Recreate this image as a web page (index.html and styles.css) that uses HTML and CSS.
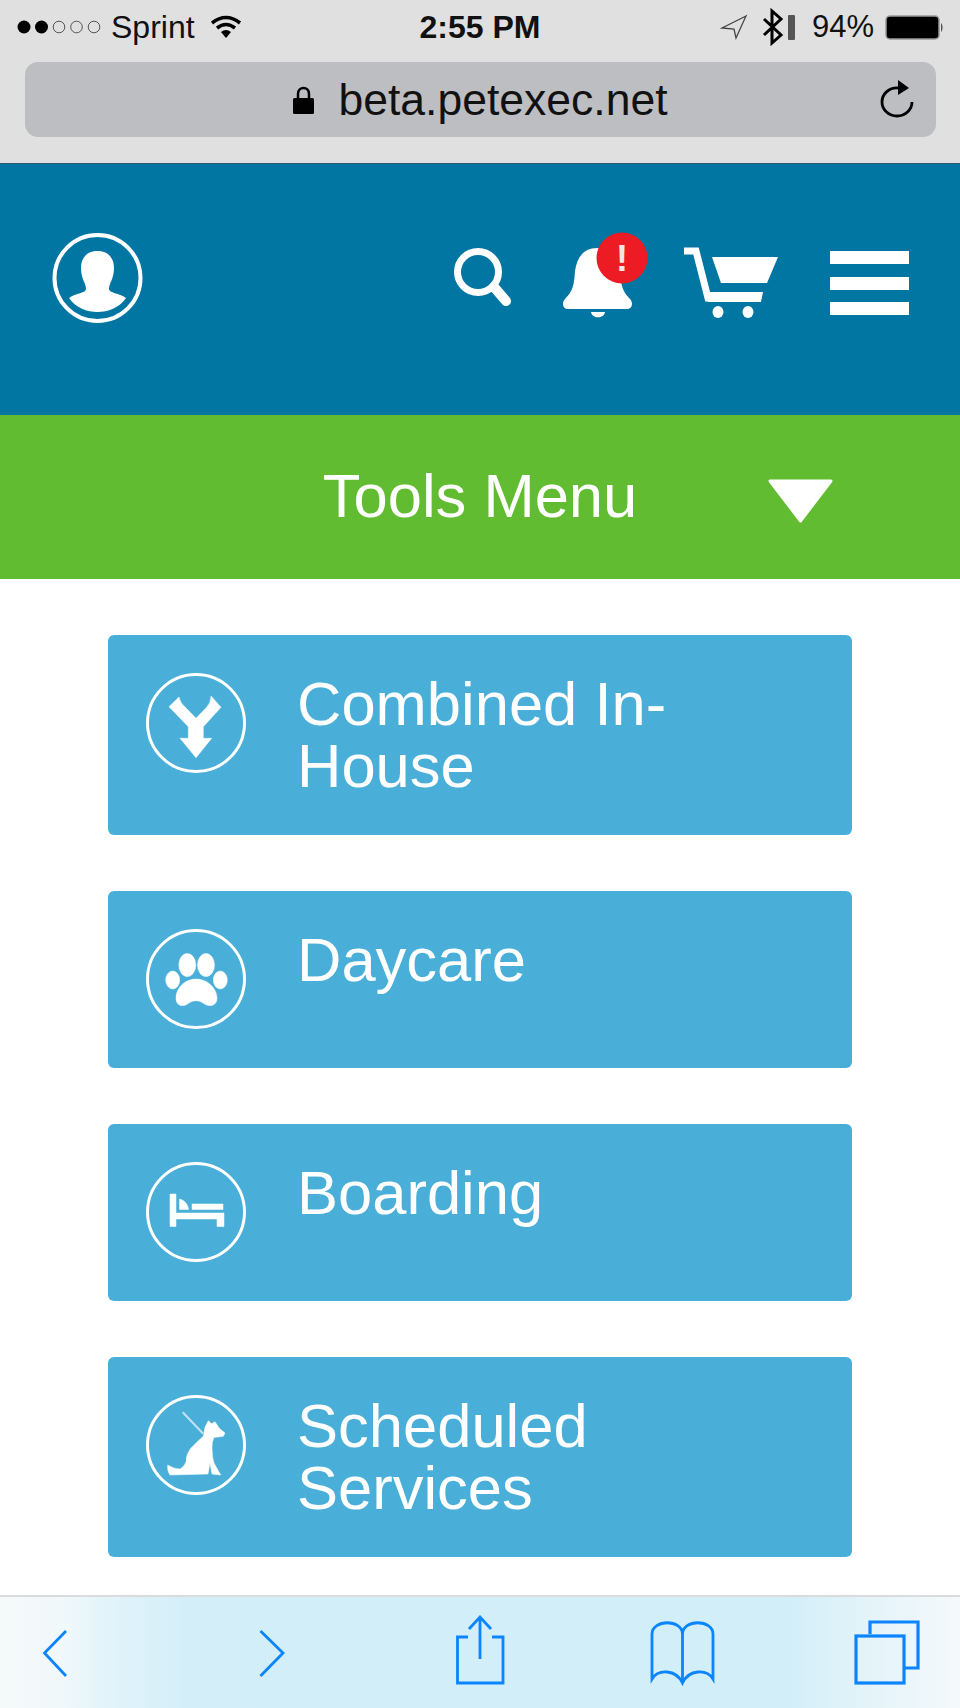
FILE: index.html
```html
<!DOCTYPE html>
<html lang="en">
<head>
    <meta charset="UTF-8">
    <meta name="viewport" content="width=device-width, initial-scale=1.0">
    <title>Tools Menu - PetExec</title>
    <link rel="stylesheet" href="styles.css">
</head>
<body>
    <div class="browser-top">
        <div class="status-bar">
            <div class="status-left">
                <svg class="signal" width="88" height="16" viewBox="0 0 88 16">
                    <circle cx="7" cy="8" r="6.5" fill="#000"/>
                    <circle cx="24.5" cy="8" r="6.5" fill="#000"/>
                    <circle cx="42" cy="8" r="5.8" fill="none" stroke="#555" stroke-width="1"/>
                    <circle cx="59.5" cy="8" r="5.8" fill="none" stroke="#555" stroke-width="1"/>
                    <circle cx="77" cy="8" r="5.8" fill="none" stroke="#555" stroke-width="1"/>
                </svg>
                <span class="carrier">Sprint</span>
                <svg class="wifi" width="32" height="24" viewBox="0 0 32 24">
                    <path d="M2 8 Q16 -3 30 8" fill="none" stroke="#000" stroke-width="3.5"/>
                    <path d="M7 13 Q16 6 25 13" fill="none" stroke="#000" stroke-width="3.5"/>
                    <path d="M11 17 Q16 13 21 17 L16 23 Z" fill="#000"/>
                </svg>
            </div>
            <div class="status-time">2:55 PM</div>
            <div class="status-right">
                <svg width="26" height="24" viewBox="0 0 26 24">
                    <path d="M25 1 L1 13 L13 14 L15 23 Z" fill="none" stroke="#444" stroke-width="1.3"/>
                </svg>
                <svg class="bluetooth" width="21" height="34" viewBox="0 0 21 34">
                    <path d="M2 9 L19 25 L10 33 V1 L19 9 L2 25" fill="none" stroke="#000" stroke-width="3"/>
                </svg>
                <span class="mini-battery"></span>
                <span class="battery-pct">94%</span>
                <svg width="58" height="25" viewBox="0 0 58 25">
                    <rect x="1" y="1" width="53" height="23" rx="4" fill="#000" stroke="#999" stroke-width="1.5"/>
                    <path d="M56 8 C58 9 58 16 56 17 Z" fill="#555"/>
                </svg>
            </div>
        </div>
        <div class="url-bar">
            <svg class="lock" width="21" height="28" viewBox="0 0 21 28">
                <path d="M5 13 V8 C5 0 16 0 16 8 V13" fill="none" stroke="#000" stroke-width="2.5"/>
                <rect x="0" y="12" width="21" height="16" rx="1.5" fill="#000"/>
            </svg>
            <span class="url-text">beta.petexec.net</span>
            <svg class="reload" width="34" height="39" viewBox="0 0 34 39">
                <path d="M19 9 C9 8 2 15 2 23 C2 31 9 37 17 37 C25 37 32 31 32 23" fill="none" stroke="#000" stroke-width="2.8"/>
                <path d="M18 1 L29 9 L18 16 Z" fill="#000"/>
            </svg>
        </div>
    </div>

    <header class="site-header">
        <svg class="header-avatar soft" width="91" height="90" viewBox="0 0 91 90">
            <circle cx="45.5" cy="45" r="43" fill="none" stroke="#fff" stroke-width="4"/>
            <path d="M45.5 18 C35 18 29 25 29 35 C29 46 34 50 34 56 C34 60 24 60 17 65 C24 75 35 79 45.5 79 C56 79 67 75 74 65 C67 60 57 60 57 56 C57 50 62 46 62 35 C62 25 56 18 45.5 18 Z" fill="#fff"/>
        </svg>
        <div class="header-actions">
            <svg class="soft" width="80" height="90" viewBox="0 0 80 90">
                <circle cx="28" cy="39" r="20.5" fill="none" stroke="#fff" stroke-width="7"/>
                <path d="M44 54 L56 68" fill="none" stroke="#fff" stroke-width="10" stroke-linecap="round"/>
            </svg>
            <svg class="bell" width="90" height="90" viewBox="0 0 90 90">
                <path d="M37 15 C24 15 17 24 15 38 C14 52 13 58 5 66 C2 69 2 76 8 76 L67 76 C73 76 73 69 70 66 C62 58 61 52 60 38 C58 24 50 15 37 15 Z" fill="#fff"/>
                <path d="M31 79 H45 C44 86 32 86 31 79 Z" fill="#fff"/>
                <circle cx="62" cy="25" r="25.5" fill="#ed1c24"/>
                <text class="bell-mark" x="62" y="38" text-anchor="middle">!</text>
            </svg>
            <svg class="soft" width="120" height="90" viewBox="0 0 120 90">
                <path d="M4 18 H16 L28 65 H80" fill="none" stroke="#fff" stroke-width="7"/>
                <path d="M26 59 H83 L81 69 H28 Z" fill="#fff"/>
                <path d="M32 24 H98 L87 50 H41 Z" fill="#fff"/>
                <ellipse cx="38" cy="79" rx="5.5" ry="6" fill="#fff"/>
                <ellipse cx="68" cy="79" rx="5.5" ry="6" fill="#fff"/>
            </svg>
            <div class="burger">
                <span></span>
                <span></span>
                <span></span>
            </div>
        </div>
    </header>

    <div class="tools-bar">
        <span></span>
        <span class="tools-title">Tools Menu</span>
        <div class="tools-arrow">
            <svg width="65" height="44" viewBox="0 0 65 44">
                <path d="M2 2 H63 L32.5 42 Z" fill="#fff" stroke="#fff" stroke-width="3" stroke-linejoin="round"/>
            </svg>
        </div>
    </div>

    <main class="tool-list">
        <a class="tool-card">
            <svg class="tool-icon" width="100" height="100" viewBox="0 0 100 100">
                <circle cx="50" cy="50" r="48.5"/>
                <path class="solid" d="M23 33.7 L33 24 Q34 30 40 35 Q46 41 50 45.3 Q54 41 60 35 Q65 30 65 23 L75 34.3 L57.3 53.7 V65.3 H65.7 L50 84.7 L34 65.3 H42.3 V53.7 Z"/>
            </svg>
            <span class="tool-name">Combined In-House</span>
        </a>
        <a class="tool-card tool-card-short">
            <svg class="tool-icon" width="100" height="100" viewBox="0 0 100 100">
                <circle cx="50" cy="50" r="48.5"/>
                <ellipse class="solid" cx="26.7" cy="51" rx="7" ry="9"/>
                <ellipse class="solid" cx="41.3" cy="36" rx="8.5" ry="11.5"/>
                <ellipse class="solid" cx="60" cy="36" rx="8.5" ry="11.5"/>
                <ellipse class="solid" cx="74.3" cy="51" rx="7" ry="9"/>
                <path class="solid" d="M50 50 C62 50 71 60 71 69 C71 78 62 78 57 74 C53 71 47 71 43 74 C38 78 30 78 30 69 C30 60 38 50 50 50 Z"/>
            </svg>
            <span class="tool-name">Daycare</span>
        </a>
        <a class="tool-card tool-card-short">
            <svg class="tool-icon" width="100" height="100" viewBox="0 0 100 100">
                <circle cx="50" cy="50" r="48.5"/>
                <path class="solid" d="M24 32 H30 V51 H78 V64.5 H71 V57 H30 V64.5 H24 Z"/>
                <path class="solid" d="M33.5 37 C38 38 42 42 42.5 47.5 H33.5 Z"/>
                <rect class="solid" x="46" y="42" width="31" height="5.5"/>
            </svg>
            <span class="tool-name">Boarding</span>
        </a>
        <a class="tool-card">
            <svg class="tool-icon" width="100" height="100" viewBox="0 0 100 100">
                <circle cx="50" cy="50" r="48.5"/>
                <path class="leash" d="M36.7 17.3 L57 38.5"/>
                <path class="solid" d="M21.7 70 Q28 74 34 74 Q38 72 40 67 Q40 59 45 53 Q52 46 57.3 41.3 L59 32.3 L62.3 25.7 L65.7 28.7 L69 26.7 L73.3 33.3 L79 38 L77.3 41.3 L68 42.5 Q66 46 66 52 Q66 62 68 68 L74.7 80 L66 79 L64 68 L62 79 L24 80 Q21 76 21.7 70 Z"/>
            </svg>
            <span class="tool-name">Scheduled Services</span>
        </a>
    </main>

    <footer class="browser-toolbar">
        <svg width="72" height="70" viewBox="0 0 72 70">
            <path d="M46 15 L24.500 37 L46 60"/>
        </svg>
        <svg width="72" height="70" viewBox="0 0 72 70">
            <path d="M32.500 15 L55 37 L32.500 60"/>
        </svg>
        <svg width="72" height="70" viewBox="0 0 72 70">
            <path d="M32 21 H21.5 V67 H67 V21 H56"/>
            <path d="M44 43 V1 M33 13 L44 1 L55 13"/>
        </svg>
        <svg width="72" height="70" viewBox="0 0 72 70">
            <path d="M39.5 67 V18 C39.5 3 9 3 9 18 V63 C15 53 33 53 39.5 67 C46 53 64 53 70 63 V18 C70 3 39.5 3 39.5 18"/>
        </svg>
        <svg width="72" height="70" viewBox="0 0 72 70">
            <path class="thick" d="M19 18 V6 H67 V52 H53"/>
            <rect class="thick" x="5" y="20" width="48" height="47"/>
        </svg>
    </footer>
</body>
</html>
```
FILE: styles.css
```css
* {
    box-sizing: border-box;
}

body {
    margin: 0;
    width: 960px;
    height: 1708px;
    overflow: hidden;
    background: #fff;
    font-family: "Liberation Sans", Arial, sans-serif;
}

svg {
    display: block;
    overflow: visible;
}

/* browser chrome */
.browser-top {
    height: 164px;
    background: #e0e0e0;
    border-bottom: 1px solid #2d5a70;
}

.status-bar {
    display: grid;
    grid-template-columns: 1fr auto 1fr;
    align-items: center;
    height: 54px;
    margin-bottom: 8px;
    padding: 0 17px;
    color: #111;
    font-size: 31px;
}

.status-left {
    display: flex;
    align-items: center;
}

.carrier {
    margin-left: 6px;
    font-size: 32px;
}

.wifi {
    margin-left: 15px;
}

.status-time {
    font-weight: bold;
    font-size: 32px;
}

.status-right {
    display: flex;
    align-items: center;
    justify-content: flex-end;
}

.bluetooth {
    margin-left: 15px;
}

.mini-battery {
    width: 7px;
    height: 25px;
    margin-left: 5px;
    background: #555;
    border-radius: 1px;
}

.battery-pct {
    margin: 0 11px 0 17px;
}

.url-bar {
    display: flex;
    align-items: center;
    justify-content: center;
    position: relative;
    height: 75px;
    margin: 0 24px 0 25px;
    background: #bdbec2;
    border-radius: 13px;
}

.lock {
    margin-right: 24px;
}

.url-text {
    font-size: 44.5px;
    color: #111;
}

.reload {
    position: absolute;
    right: 22px;
    top: 17px;
}

/* site header */
.site-header {
    display: flex;
    align-items: flex-start;
    justify-content: space-between;
    height: 251px;
    padding: 69px 51px 0 52px;
    background: #0276a3;
}

.header-actions {
    display: flex;
    gap: 30px;
}

.soft {
    filter: blur(0.5px);
}

.bell-mark {
    font-family: "Liberation Sans", Arial, sans-serif;
    font-weight: bold;
    font-size: 36px;
    fill: #f6e4e4;
}

.burger {
    display: flex;
    flex-direction: column;
    gap: 12.5px;
    width: 79px;
    margin-top: 18px;
}

.burger span {
    height: 13px;
    background: #fff;
}

.tools-bar {
    display: grid;
    grid-template-columns: 1fr auto 1fr;
    align-items: center;
    height: 164px;
    background: #62bc31;
    color: #fff;
    font-size: 61.5px;
}

.tools-title {
    padding-bottom: 4px;
}

.tools-arrow {
    padding: 8px 0 0 131px;
}

/* tool cards */
.tool-list {
    display: flex;
    flex-direction: column;
    gap: 56px;
    padding: 56px 108px 38px;
}

.tool-card {
    display: flex;
    align-items: flex-start;
    gap: 51px;
    min-height: 200px;
    padding: 38px;
    background: #49afd8;
    border-radius: 6px;
    color: #fff;
    font-size: 61.5px;
    line-height: 62px;
}

.tool-card-short {
    min-height: 177px;
}

.tool-icon {
    flex: none;
}

.tool-icon circle {
    fill: none;
    stroke: #fff;
    stroke-width: 3;
}

.tool-icon .solid {
    fill: #fff;
    stroke: #fff;
    stroke-width: 0.5;
    stroke-linejoin: round;
    filter: blur(0.6px);
}

.tool-icon .leash {
    fill: none;
    stroke: #bfe3f2;
    stroke-width: 2;
}

/* bottom toolbar */
.browser-toolbar {
    display: flex;
    justify-content: space-between;
    height: 114px;
    padding: 19px 37px 0 20px;
    border-top: 2px solid #d9dbdc;
    background: linear-gradient(90deg, #f5f9fa 0, #f1f8fa 60px, #e2f3f9 110px, #d3eef9 190px, #d1eef9 480px, #d1eef9 780px, #e2f3f9 860px, #f5f9fa 960px);
}

.browser-toolbar path,
.browser-toolbar rect {
    fill: none;
    stroke: #0a84ff;
    stroke-width: 2.8;
}

.browser-toolbar .thick {
    stroke-width: 3.2;
}
```
